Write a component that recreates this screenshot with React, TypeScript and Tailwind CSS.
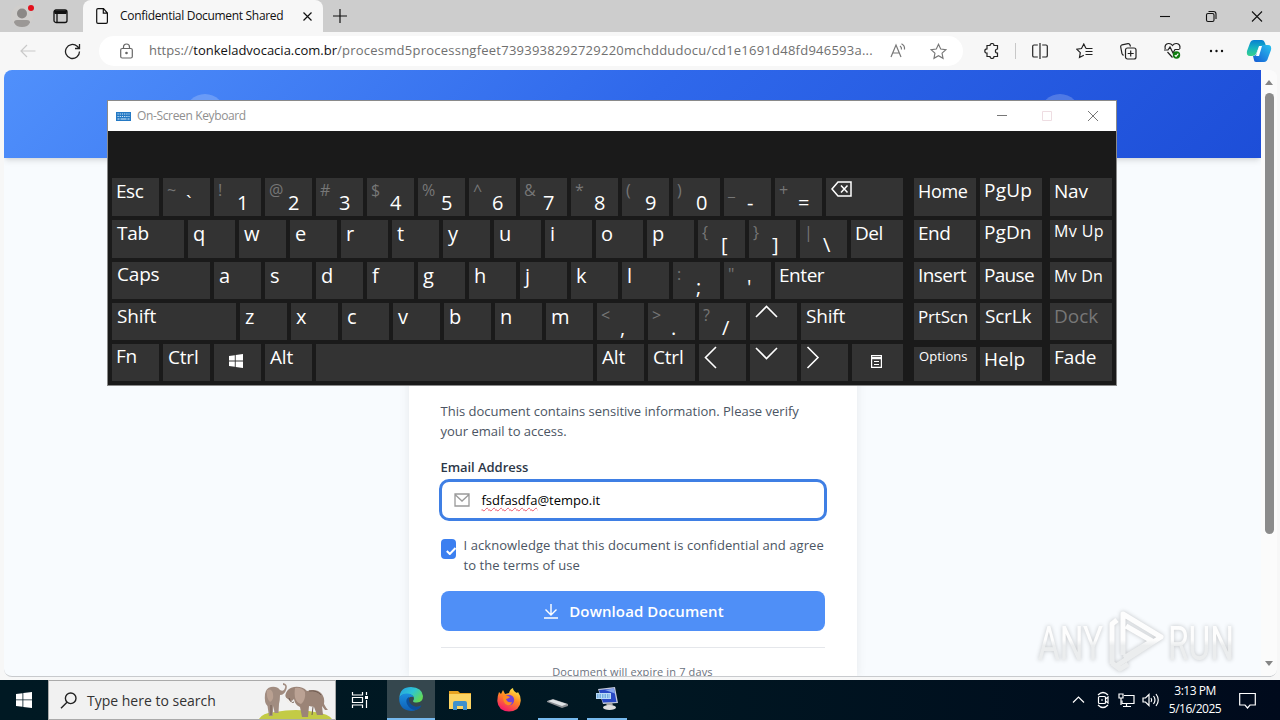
import type { ReactNode } from "react";

type KeyDef = {
  label?: ReactNode;
  shift?: string;
  w?: string;
  size?: string;
  dim?: boolean;
  center?: boolean;
  box?: string;
};

const chevron = (d: string) => (
  <svg className="mt-[-1px] block h-7 w-7" viewBox="0 0 28 28" fill="none" stroke="#fff" strokeWidth="1.6">
    <path d={d} />
  </svg>
);

const letters = (s: string): KeyDef[] => s.split("").map((label) => ({ label, size: "text-[20px] leading-[28px]" }));

const wide = "text-[19px] leading-[26px] tracking-[-0.2px]";
// words that start with a straight stem sit a pixel further left
const stem = "-ml-px text-[19px] leading-[26px] tracking-[-0.45px]";

const mainRows: KeyDef[][] = [
  [
    { label: "Esc", size: stem },
    { label: "`", shift: "~" },
    { label: "1", shift: "!" },
    { label: "2", shift: "@" },
    { label: "3", shift: "#" },
    { label: "4", shift: "$" },
    { label: "5", shift: "%" },
    { label: "6", shift: "^" },
    { label: "7", shift: "&" },
    { label: "8", shift: "*" },
    { label: "9", shift: "(" },
    { label: "0", shift: ")" },
    { label: "-", shift: "_" },
    { label: "=", shift: "+" },
    {
      w: "w-[77px]",
      label: (
        <svg className="mt-[3px] block" width="22" height="16" viewBox="0 0 22 16" fill="none" stroke="#fff" strokeWidth="1.5">
          <path d="M1 8 7 1h13v14H7Z M10 4.5l6.5 7 M16.500 4.500l-6.500 7" />
        </svg>
      ),
    },
  ],
  [
    { label: "Tab", w: "w-[72px]", size: wide },
    ...letters("qwertyuiop"),
    { label: "[", shift: "{" },
    { label: "]", shift: "}" },
    { label: "\\", shift: "|" },
    { label: "Del", w: "w-[52px]", size: stem },
  ],
  [
    { label: "Caps", w: "w-[98px]", size: "text-[19px] leading-[25px] tracking-[-0.2px]" },
    ...letters("asdfghjkl"),
    { label: ";", shift: ":" },
    { label: "'", shift: "\"" },
    { label: "Enter", w: "w-[128px]", size: stem },
  ],
  [
    { label: "Shift", w: "w-[124px]", size: wide },
    ...letters("zxcvbnm"),
    { label: ",", shift: "<" },
    { label: ".", shift: ">" },
    { label: "/", shift: "?" },
    { label: chevron("M1 15 11.500 4.500 22 15") },
    { label: "Shift", w: "w-[102px]", size: wide },
  ],
  [
    { label: "Fn", size: "-ml-px text-[19px] leading-[25px] tracking-[-0.3px]" },
    { label: "Ctrl", size: wide },
    {
      center: true,
      label: (
        <svg className="mb-[3px] mr-[3px]" width="14" height="14" viewBox="0 0 14 14" fill="#fff">
          <path d="M0 2 5.800 1.200V6.500H0ZM6.700 1 14 0V6.500H6.700ZM0 7.500H5.800V12.800L0 12ZM6.700 7.500H14V14L6.700 13Z" />
        </svg>
      ),
    },
    { label: "Alt", size: wide },
    { w: "w-[277px]" },
    { label: "Alt", size: wide },
    { label: "Ctrl", size: wide },
    { label: chevron("M12 4 1.500 14.500 12 25") },
    { label: chevron("M1 5 11.500 15.500 22 5") },
    { label: chevron("M1.500 4 12 14.500 1.500 25") },
    {
      w: "w-[51px]",
      center: true,
      label: (
        <svg className="mb-0.5 mr-[3px]" width="11" height="13" viewBox="0 0 11 13" fill="none" stroke="#fff" strokeWidth="1.200">
          <path d="M.6.600h9.800v11.800H.6Z M.6 2.500h9.800 M.6 3.600h9.800 M3 6.500h5 M3 9.500h5" />
        </svg>
      ),
    },
  ],
];

const navRows: KeyDef[][] = [
  [
    { label: "Home", size: "-ml-px text-[18px] leading-[27px] tracking-[-0.3px]" },
    { label: "PgUp", size: "-ml-px text-[19px] leading-[25px] tracking-[0.2px]" },
  ],
  [
    { label: "End", size: stem },
    { label: "PgDn", size: "-ml-px text-[19px] leading-[25px] tracking-[0.1px]" },
  ],
  [
    { label: "Insert", size: "-ml-px text-[19px] leading-[26px] tracking-[-0.55px]" },
    { label: "Pause", size: "-ml-px text-[19px] leading-[26px] tracking-[-0.7px]" },
  ],
  [
    { label: "PrtScn", size: "-ml-px text-[17px] leading-[28px] tracking-[-0.2px]" },
    { label: "ScrLk", size: wide },
  ],
  [
    { label: "Options", size: "text-[13px] leading-[19px] tracking-[0.1px]", box: "mt-[3px] h-[34px]" },
    { label: "Help", size: "-ml-px text-[19px] leading-[24px]", box: "mt-[3px] h-[34px]" },
  ],
];

const sideKeys: KeyDef[] = [
  { label: "Nav", size: "-ml-px text-[19px] leading-[26px] tracking-[-0.2px]" },
  { label: "Mv Up", size: "-ml-px text-[16px] leading-[23px] tracking-[0.4px]" },
  { label: "Mv Dn", size: "-ml-px text-[16px] leading-[29px] tracking-[0.2px]" },
  { label: "Dock", size: "-ml-px text-[19px] leading-[26px]", dim: true },
  { label: "Fade", size: "-ml-px text-[19px] leading-[26px] tracking-[-0.1px]" },
];

function Key({ label, shift, w = "w-[47px]", size = "", dim, center, box = "h-full" }: KeyDef) {
  const color = dim ? "text-[#777]" : "text-white";
  if (shift) {
    return (
      <div className={`${w} ${box} flex shrink-0 bg-[#333] pl-1`}>
        <span className="w-[18px] shrink-0 text-[16px] leading-[25px] text-[#777]">{shift}</span>
        <span className="pl-px pt-[11px] text-[20px] leading-[28px] text-white">{label}</span>
      </div>
    );
  }
  if (center) {
    return <div className={`${w} ${box} flex shrink-0 items-center justify-center bg-[#333]`}>{label}</div>;
  }
  return (
    <div className={`${w} ${box} shrink-0 whitespace-nowrap bg-[#333] pl-[5px]`}>
      <div className={`${size} ${color}`}>{label}</div>
    </div>
  );
}

const rowGrid = "grid grid-rows-[38px_38px_37px_37px_37px] gap-1";

function OnScreenKeyboard() {
  return (
    <div className="absolute left-[107px] top-[100px] w-[1010px] border border-[#8a8a8a] bg-[#1a1a1a] font-['Open_Sans',sans-serif]">
      <div className="flex h-[30px] items-center bg-white text-[#8f8f8f]">
        <svg className="ml-2" width="15" height="9" viewBox="0 0 15 9">
          <path d="M0 0h15v9H0Z" fill="#2479c4" />
          <path d="M1.500 2h12M1.500 4.500h12" stroke="#d9ecfa" strokeWidth="1" strokeDasharray="1.200 1" />
          <path d="M1.500 7h2M4.500 7h6M11.500 7h2" stroke="#d9ecfa" />
        </svg>
        <span className="ml-1.5 text-[12px] tracking-[-0.36px]">On-Screen Keyboard</span>
        <svg className="ml-auto mr-[12px]" width="110" height="14" viewBox="0 0 110 14" fill="none">
          <path d="M3 6.500h10" stroke="#777" />
          <path d="M48.500 2.500h9v9h-9z" stroke="#eedde2" />
          <path d="m94 2 10 10M104 2 94 12" stroke="#777" />
        </svg>
      </div>
      <div className="flex px-1 pb-1 pt-[47px]">
        <div className={rowGrid}>
          {mainRows.map((row, i) => (
            <div key={i} className="flex gap-1">
              {row.map((k, j) => (
                <Key key={j} {...k} />
              ))}
            </div>
          ))}
        </div>
        <div className={`${rowGrid} ml-[11px]`}>
          {navRows.map((row, i) => (
            <div key={i} className="flex gap-1">
              {row.map((k, j) => (
                <Key key={j} {...k} w="w-[62px]" />
              ))}
            </div>
          ))}
        </div>
        <div className={`${rowGrid} ml-2`}>
          {sideKeys.map((k, i) => (
            <Key key={i} {...k} w="w-[62px]" />
          ))}
        </div>
      </div>
    </div>
  );
}

function TabStrip() {
  return (
    <div className="flex h-8 shrink-0 items-center bg-[#cdcdcd]">
      <svg className="ml-[10px]" width="26" height="28" viewBox="0 0 26 28">
        <circle cx="12" cy="14" r="11" fill="#d0cecc" />
        <circle cx="12" cy="11.500" r="5" fill="#8b8886" />
        <path d="M4 20.500q0-2.500 3-2.500h10q3 0 3 2.500-2 4.500-8 4.500t-8-4.500Z" fill="#9b9896" />
        <circle cx="21" cy="6" r="3" fill="#e3101c" />
      </svg>
      <svg className="ml-[17px]" width="15" height="15" viewBox="0 0 15 15" fill="none" stroke="#111" strokeWidth="1.300">
        <rect x="1" y="1" width="13" height="12.500" rx="2" />
        <path d="M1 2.500h13M1.500 4h12" strokeWidth="1.800" />
        <path d="M4 4v9" />
      </svg>
      <div className="ml-[15px] flex h-8 w-[240px] items-center rounded-t-lg bg-[#f7f7f7] pl-[13px] pr-[11px]">
        <svg width="12" height="16" viewBox="0 0 12 16" fill="none" stroke="#111" strokeWidth="1.200">
          <path d="M2 .7h5.500L11.400 5v9q0 1.300-1.300 1.300H2Q.7 15.300.7 14V2Q.7.700 2 .7ZM7.300 1v4.200h4" />
        </svg>
        <span className="ml-3 whitespace-nowrap text-[12px] tracking-[-0.31px] text-[#111]">Confidential Document Shared</span>
        <svg className="ml-auto" width="9" height="9" viewBox="0 0 9 9" stroke="#111" strokeWidth="1.200">
          <path d="m.5.500 8 8M8.500.500l-8 8" />
        </svg>
      </div>
      <svg className="ml-[10px]" width="14" height="14" viewBox="0 0 14 14" stroke="#111" strokeWidth="1.200">
        <path d="M7 0v14M0 7h14" />
      </svg>
      <svg className="ml-auto mr-[15px]" width="106" height="14" viewBox="0 0 106 14" fill="none" stroke="#111" strokeWidth="1.100">
        <path d="M1 7.500h10" />
        <rect x="47.500" y="4.500" width="7.500" height="8" rx="1.500" />
        <path d="M49.500 2.500h5q2.500 0 2.500 2.500v5" />
        <path d="m93 2.500 10 10M103 2.500l-10 10" />
      </svg>
    </div>
  );
}

function Toolbar() {
  return (
    <div className="flex h-[38px] shrink-0 items-center bg-[#f7f7f7]">
      <svg className="ml-5" width="16" height="14" viewBox="0 0 16 14" fill="none" stroke="#c9c9c9" strokeWidth="1.200">
        <path d="M15.500 7H1M7 1 1 7l6 6" />
      </svg>
      <svg className="ml-7" width="17" height="17" viewBox="0 0 17 17" fill="none" stroke="#222" strokeWidth="1.300">
        <path d="M15.500 8.500a7 7 0 1 1-2.300-5.200l2 2M15.500 1v4.500H11" />
      </svg>
      <div className="ml-[18px] flex h-[30px] w-[864px] items-center rounded-full bg-white pl-[21px] pr-4">
        <svg className="shrink-0" width="13" height="16" viewBox="0 0 13 16" fill="none" stroke="#666" strokeWidth="1.200">
          <rect x=".7" y="5.500" width="11.600" height="9.500" rx="1.500" />
          <path d="M3.500 5.500V4a3 3 0 0 1 6 0v1.500" />
          <circle cx="6.500" cy="10" r=".7" fill="#555" />
        </svg>
        <span className="ml-4 whitespace-nowrap text-[13px] text-[#707070]">
          https://<span className="text-[#111]">tonkeladvocacia.com.br</span>
          <span className="tracking-[0.24px]">/procesmd5processngfeet7393938292729220mchddudocu/cd1e1691d48fd946593a...</span>
        </span>
        <svg className="ml-auto shrink-0" width="16" height="16" viewBox="0 0 16 16" fill="none" stroke="#777" strokeWidth="1.200">
          <path d="M1 14 6 2l5 12M2.800 10h6.400M10 3q1.800 1.200 1.500 3.500M11.500.700Q15 2.500 14.500 6.500" />
        </svg>
        <svg className="ml-6 shrink-0" width="17" height="17" viewBox="0 0 24 24" fill="none" stroke="#777" strokeWidth="1.600">
          <path d="m12 1.800 3.100 6.700 7.300.9-5.400 5 1.400 7.200-6.400-3.600-6.400 3.600L7 14.400l-5.400-5 7.300-.9Z" />
        </svg>
      </div>
      <svg className="ml-[21px]" width="16" height="16" viewBox="0 0 16 16" fill="none" stroke="#222" strokeWidth="1.200">
        <path d="M3 2.500h3a2 2 0 0 1 4 0h3.500V6a2 2 0 0 0 0 4.200v3.300H10a2 2 0 0 1-4 0H3v-3.300a2.200 2.200 0 0 1 0-4.400Z" />
      </svg>
      <div className="ml-[15px] h-4 w-px bg-[#c8c8c8]" />
      <svg className="ml-4" width="16" height="16" viewBox="0 0 16 16" fill="none" stroke="#222" strokeWidth="1.200">
        <path d="M5.800 2H2Q.7 2 .7 3.300v9.400Q.7 14 2 14h3.800M8 0v16M10.200 2H14q1.300 0 1.300 1.300v9.400Q15.300 14 14 14h-3.800" />
      </svg>
      <svg className="ml-[28px]" width="17" height="16" viewBox="0 0 17 16" fill="none" stroke="#222" strokeWidth="1.200">
        <path d="M10 5.400 7.800 1 5.500 5.500l-4.800.7 3.600 3.400L3.500 14.500l4.300-2.300M10 5.500h6.500M9.500 8.500h7M9.500 11.500h7" />
      </svg>
      <svg className="ml-[27px]" width="17" height="17" viewBox="0 0 17 17" fill="none" stroke="#222" strokeWidth="1.200">
        <path d="M3.500 12.500 2 10.800.7 4Q.5 2.300 2 1.800L8 .7q1.500-.2 2 1.300l.5 1.500" />
        <rect x="5.500" y="5" width="10.500" height="11" rx="2" />
        <path d="M10.700 7.500v6M7.700 10.500h6" />
      </svg>
      <svg className="ml-[27px]" width="18" height="18" viewBox="0 0 18 18" fill="none" stroke="#222" strokeWidth="1.200">
        <path d="M1.200 7Q.2 2 4.500 1.500 7 1.300 8.500 3.500 10 1.300 12.500 1.500 16.800 2 15.800 7M3.500 10l5 5.500" />
        <path d="M0 8h4l2-3 3 6 2-3.500h4.500" />
        <circle cx="12.500" cy="13" r="3.700" fill="#107c10" stroke="none" />
        <path d="m10.800 13.200 1.200 1.200 2.300-2.700" stroke="#fff" />
      </svg>
      <svg className="ml-[27px]" width="15" height="4" viewBox="0 0 15 4" fill="#111">
        <circle cx="2" cy="2" r="1.200" />
        <circle cx="7.500" cy="2" r="1.200" />
        <circle cx="13" cy="2" r="1.200" />
      </svg>
      <svg className="ml-[22px]" width="26" height="24" viewBox="0 0 26 24">
        <defs>
          <linearGradient id="cpA" x1="0" y1="0" x2="0" y2="1">
            <stop offset="0" stopColor="#087fd1" />
            <stop offset=".5" stopColor="#17b3c0" />
            <stop offset="1" stopColor="#38d18c" />
          </linearGradient>
          <linearGradient id="cpB" x1="1" y1="0" x2="0" y2="1">
            <stop offset="0" stopColor="#2ac3ef" />
            <stop offset="1" stopColor="#1459d3" />
          </linearGradient>
        </defs>
        <path d="M8 1h8q2 0 3 3l1 3h-5q-2 0-3 3l-2 5q-1 2-4 2H4q-4 0-3-5L4 4q1-3 4-3Z" fill="url(#cpA)" />
        <path d="M18 23h-8q-2 0-2-2l-1-4q3 0 4-3l2-5q1-3 4-3h5q4 0 3 5l-3 8q-1 4-4 4Z" fill="url(#cpB)" />
        <path d="M13 7h3l-3 10h-3Z" fill="#fff" />
      </svg>
    </div>
  );
}

function EmailCard() {
  return (
    <div className="mx-auto h-[519px] w-[448px] bg-white px-8 pt-[243px] shadow-[0_0_10px_rgba(0,0,0,0.08)]">
      <p className="whitespace-nowrap text-[13px] leading-5 text-[#4b5563]">
        This document contains sensitive information. Please verify
        <br />
        your email to access.
      </p>
      <div className="mt-4 text-[13px] font-semibold leading-5 tracking-[-0.05px] text-[#2c3748]">Email Address</div>
      <div className="-mx-0.5 mt-0.5 flex h-[42px] items-center rounded-[10px] border-[3px] border-[#3f7fe4] bg-white pl-3">
        <svg width="16" height="14" viewBox="0 0 16 14" fill="none" stroke="#9a9a9a" strokeWidth="1.300">
          <path d="M1 1h14v12H1ZM1.500 2 8 8l6.500-6" />
        </svg>
        <span className="ml-3 pt-0.5 text-[13px] text-black">
          <span className="underline decoration-[#ee5566] decoration-wavy decoration-1 underline-offset-[2px]">fsdfasdfa</span>@tempo.it
        </span>
      </div>
      <div className="mt-[14px] flex">
        <div className="mt-1 flex h-5 w-[15px] shrink-0 items-center justify-end rounded bg-[#3b7ff0] pt-1">
          <svg width="10" height="8" viewBox="0 0 10 8" fill="none" stroke="#fff" strokeWidth="2">
            <path d="m.8 4 3 3L9.500 1" />
          </svg>
        </div>
        <p className="ml-2 whitespace-nowrap text-[13px] leading-5 tracking-[0.07px] text-[#4b5563]">
          I acknowledge that this document is confidential and agree
          <br />
          to the terms of use
        </p>
      </div>
      <div className="mt-4 flex h-10 items-center justify-center rounded-lg bg-[#4f8ff7] pl-[3px] text-[15px] font-semibold text-white">
        <svg width="14" height="15" viewBox="0 0 14 15" fill="none" stroke="#fff" strokeWidth="1.400">
          <path d="M7 0v11M1.500 5.500 7 11l5.500-5.500M0 14h14" />
        </svg>
        <span className="ml-[11px] tracking-[0.1px]">Download Document</span>
      </div>
      <div className="mt-4 border-t border-[#e5e7eb] pt-4 text-center text-[11px] leading-4 tracking-[0.14px] text-[#6b7280]">
        Document will expire in 7 days
      </div>
    </div>
  );
}

function WebPage() {
  return (
    <div className="flex h-[610px] shrink-0 bg-[#f7f7f7] pb-[3px] pl-1 pr-[3px]">
      <div className="flex flex-1 overflow-hidden rounded-lg border-b border-[#c8cacd] bg-[#f8fbfe]">
        <div className="w-[1257px]">
          <div className="flex h-[88px] items-start justify-between bg-linear-[135deg,#5090fb,#2f68eb_50%,#1d4ed8] px-[181px] pt-6 shadow-md">
            <div className="h-10 w-10 rounded-full bg-white/20" />
            <div className="h-10 w-10 rounded-full bg-white/20" />
          </div>
          <EmailCard />
        </div>
        <div className="flex flex-1 flex-col items-center bg-[#fbfbfb] pt-[10px] pb-[10px]">
          <div className="border-x-[4px] border-b-[5px] border-x-transparent border-b-[#858585]" />
          <div className="mt-2 h-[441px] w-[9px] rounded-full bg-[#8b8b8b]" />
          <div className="mt-auto border-x-[4px] border-t-[5px] border-x-transparent border-t-[#858585]" />
        </div>
      </div>
    </div>
  );
}

function Elephants() {
  return (
    <svg className="ml-auto self-end" width="78" height="38" viewBox="0 0 78 38">
      <path d="M2 38Q5 32 18 31q22-4 40 0 14 2 17 7Z" fill="#c3cb45" />
      <path d="M12 35 10.500 25Q7 22 8 13q1-6 6-7 6-1 9 3 4 2 5-2 1-3-2-3V2q5 1 3.500 6-2 6-6.500 6 0 5-1 9l-.5 9h-4l-1-7-1 10Z" fill="#a18c80" />
      <path d="M10 9q5-2 6 4t-3 8q-4-4-3-12Z" fill="#b9a091" />
      <path d="M29 12q2-5 8-6 8-1 13 4 9-3 14 2 4 4 3 11 2 4 4 6h-3l-3-4 1 9h-6l-3-8-5-1-1 11h-6l-2-10q-5-2-6-8-3 4-6 0-4-2-2-6Z" fill="#9b8477" />
      <path d="M38 7q7-1 10 4 1 8-4 12-8-2-6-16Z" fill="#bba294" />
      <path d="M32 17q2 6 5 4M52 10q8-1 12 4M14 24v10M56 26l-1 8" stroke="#6e5b51" fill="none" />
      <path d="m29 17 2 4 4 1" stroke="#f3eee8" fill="none" />
    </svg>
  );
}

function Taskbar() {
  return (
    <div className="flex h-10 shrink-0 bg-linear-to-r from-[#001923] via-[#001722] to-[#000a1c] text-white">
      <div className="flex w-12 items-center justify-center">
        <svg width="16" height="16" viewBox="0 0 16 16" fill="#fff">
          <path d="M0 2 6.500 1.200V7.500H0ZM7.300 1.100 16 0V7.500H7.300ZM0 8.300H6.500V14.800L0 14ZM7.300 8.300H16V16L7.300 14.900Z" />
        </svg>
      </div>
      <div className="flex w-72 items-center border border-[#aaa] bg-[#f1f1f1] pl-[11px]">
        <svg width="17" height="17" viewBox="0 0 17 17" fill="none" stroke="#222" strokeWidth="1.400">
          <circle cx="10.700" cy="6.300" r="5.300" />
          <path d="M7 10.200 1 16.200" />
        </svg>
        <span className="ml-[10px] whitespace-nowrap text-[14px] text-[#333]">Type here to search</span>
        <Elephants />
      </div>
      <div className="flex w-[51px] items-center justify-center pr-1">
        <svg width="18" height="16" viewBox="0 0 18 16" fill="none" stroke="#fff" strokeWidth="1.200">
          <path d="M1.500 0v3h10V0M1.500 16v-3h10v3M1.500 5.500h10v5h-10ZM15.500 0v3M15.500 8v8" />
          <path d="M14 4h3v3h-3z" fill="#fff" stroke="none" />
        </svg>
      </div>
      <div className="flex w-12 items-center justify-center border-b-2 border-[#76b9ed] bg-[#35474e]">
        <svg width="24" height="24" viewBox="0 0 24 24">
          <defs>
            <linearGradient id="edA" x1="0" y1="0" x2="1" y2=".6">
              <stop offset="0" stopColor="#249de5" />
              <stop offset=".55" stopColor="#2ec5d2" />
              <stop offset="1" stopColor="#62d957" />
            </linearGradient>
            <linearGradient id="edB" x1="0" y1="0" x2="0" y2="1">
              <stop offset="0" stopColor="#1b8ee0" />
              <stop offset="1" stopColor="#0f5fb4" />
            </linearGradient>
          </defs>
          <path d="M.3 11Q1 0 12 0q11 .5 12 9 0 6-6 6.500-4 0-4-1.500 1-1 1-3Q14 7 8 7 2 7 .3 11Z" fill="url(#edA)" />
          <path d="M.2 11Q2 6.500 8 6.500q5 0 6.800 3.500Q9 9 9 14q1 6 8 6 3 0 5-1.500Q18 24 12 24 0 23 .2 11Z" fill="url(#edB)" />
          <path d="M10 10q-4 2-2 7 3 6 9 6 4-1 5.500-4.500-3 1.500-6 1.200Q9 18 10 10Z" fill="#0c4f9c" />
        </svg>
      </div>
      <div className="flex w-[49px] items-center justify-center">
        <svg width="22" height="20" viewBox="0 0 22 20">
          <path d="M0 1h9l2 2h11v5H0Z" fill="#e8a321" />
          <path d="M0 4h22v15H0Z" fill="#fcd463" />
          <path d="M4 20v-7q0-2 2-2h10q2 0 2 2v7h-4v-4H8v4Z" fill="#3f91cc" />
        </svg>
      </div>
      <div className="flex w-[49px] items-center justify-center">
        <svg width="24" height="24" viewBox="0 0 24 24">
          <defs>
            <linearGradient id="ffA" x1=".8" y1="0" x2=".3" y2="1">
              <stop offset="0" stopColor="#fff04a" />
              <stop offset=".45" stopColor="#ff8a22" />
              <stop offset="1" stopColor="#f5156c" />
            </linearGradient>
          </defs>
          <path d="M2 4q1 1 2 2l2-4 2 4 4-1q1-4 4-5 0 3 4 5l1-1q3 4 2.700 9Q23 23 12 23.500 1 23 .3 13 .3 8 2 4Z" fill="url(#ffA)" />
          <circle cx="12" cy="12" r="5.200" fill="#7142d8" />
          <path d="M6 8q4-1 7 1-2 2-4 2 1 4 6 3-1 4-5 3-4-1-4-9Z" fill="#ff8a1f" />
        </svg>
      </div>
      <div className="flex w-[49px] justify-center">
        <div className="flex w-10 items-center justify-center border-b-2 border-[#76b9ed]">
          <svg className="mt-2" width="22" height="9" viewBox="0 0 22 9">
            <path d="M0 2 6 0l15 5v2l-6 2L0 3Z" fill="#898d92" />
            <path d="m1 2 5-1.500L20 5l-5 2Z" fill="#dfe3e6" />
          </svg>
        </div>
      </div>
      <div className="flex w-[49px] justify-center">
        <div className="flex w-10 items-center justify-center border-b-2 border-[#76b9ed]">
          <svg width="24" height="24" viewBox="0 0 24 24">
            <path d="M3 2 20 0l3 16-15 1Z" fill="#c5cbdd" />
            <path d="M4 3 19 1.500 21.500 15 8 15.500Z" fill="#2848c4" />
            <path d="m10 3 9-1.500 1 5Z" fill="#85a5ee" />
            <path d="M1 6h15v6H1Z" fill="#b9d9f6" />
            <path d="M2 8h13M2 10h13" stroke="#3184cb" strokeDasharray="1.500 1" />
            <path d="m11 16 6-.5 1 3-6 1Z" fill="#a8a8a8" />
            <ellipse cx="14.500" cy="20.500" rx="6.500" ry="2.500" fill="#dedede" />
          </svg>
        </div>
      </div>
      <svg className="ml-auto self-center" width="92" height="20" viewBox="0 0 92 20" fill="none" stroke="#fff" strokeWidth="1.200">
        <path d="m2 12.500 5.500-5.500 5.500 5.500" />
        <path d="M27 5q5-5 10 0M27 15q5 5 10 0" />
        <rect x="27.500" y="6.500" width="7" height="7" rx="1" />
        <path d="m34.500 9 2.500-2v6l-2.500-2M30 10h2" />
        <path d="M53 5.500h10v8H51v-3M55.500 13.500v3M52 16.500h8" />
        <path d="M48 4h4v4h-4zM50 8v7" />
        <path d="M72 8h2.500L78 4.500v11L74.500 12H72ZM80 8q1.500 2 0 4M82.500 6q3 4 0 8M85 4q4.500 6 0 12" />
      </svg>
      <div className="ml-0.5 flex w-[60px] flex-col items-center justify-center whitespace-nowrap text-[12px] leading-[18px] tracking-[-0.5px]">
        <span>3:13 PM</span>
        <span>5/16/2025</span>
      </div>
      <svg className="ml-[14px] mr-6 self-center" width="17" height="17" viewBox="0 0 17 17" fill="none" stroke="#fff" strokeWidth="1.200">
        <path d="M.7 1.500h15.600v11.500H11l-2.500 3L6 13H.7Z" />
      </svg>
    </div>
  );
}

function Watermark() {
  return (
    <svg
      className="absolute left-[1030px] top-[602px] overflow-visible drop-shadow-[0_0_2px_rgba(0,0,0,0.22)]"
      width="210"
      height="76"
      viewBox="0 0 210 76"
      fill="url(#wm)"
      fontFamily="Roboto, sans-serif"
      fontSize="48"
      fontWeight="400"
    >
      <defs>
        <linearGradient id="wm" gradientUnits="userSpaceOnUse" x1="0" y1="10" x2="0" y2="66">
          <stop offset=".5" stopColor="#fdfdfd" />
          <stop offset=".6" stopColor="#ebedee" />
        </linearGradient>
      </defs>
      <text x="8" y="58" textLength="65" lengthAdjust="spacingAndGlyphs">ANY</text>
      <text x="138" y="58" textLength="66" lengthAdjust="spacingAndGlyphs">RUN</text>
      <g fill="none" stroke="url(#wm)" strokeWidth="5" strokeLinejoin="round">
        <path d="M93 53V12L131 35 86 64M96 24l26 15-28 17" />
        <path d="M82 62V22l5-4M82 61 90 67l8-5" />
      </g>
    </svg>
  );
}

export default function App() {
  return (
    <div className="relative flex h-[720px] w-[1280px] flex-col overflow-hidden bg-[#f7f7f7] font-['Open_Sans','Noto_Sans',sans-serif]">
      <TabStrip />
      <Toolbar />
      <WebPage />
      <Taskbar />
      <OnScreenKeyboard />
      <Watermark />
    </div>
  );
}
